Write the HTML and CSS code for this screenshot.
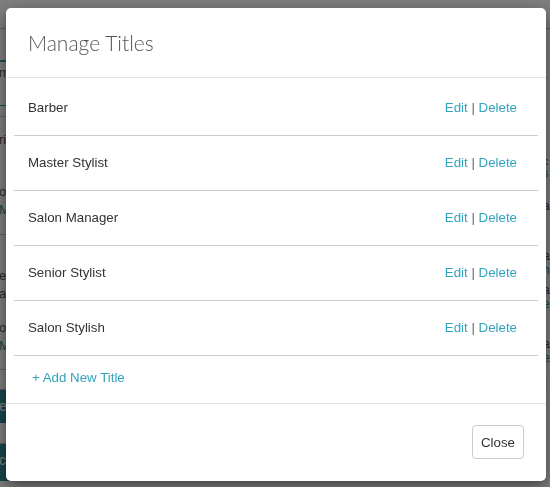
FILE: index.html
```html
<!DOCTYPE html>
<html>
<head>
<meta charset="utf-8">
<link rel="stylesheet" href="styles.css">
</head>
<body>
<div class="page">
  <div class="bg-left">
    <div class="bg-top"></div>
    <div class="bg-tab"></div>
    <div class="bg-text bg-h22">mon</div>
    <div class="bg-tab2"></div>
    <div class="bg-line"></div>
    <div class="bg-text bg-h22 bg-m12">rio</div>
    <div class="bg-text bg-h18 bg-m32">ocu</div>
    <div class="bg-text bg-teal bg-h18">Ma</div>
    <div class="bg-line bg-m15"></div>
    <div class="bg-text bg-h18 bg-m32">ey</div>
    <div class="bg-text bg-h18">al</div>
    <div class="bg-text bg-h18 bg-m16">ot</div>
    <div class="bg-text bg-teal bg-h18">Ma</div>
    <div class="bg-line bg-m14"></div>
    <div class="bg-btn bg-m19">e</div>
    <div class="bg-btn bg-m20 bg-tall">c</div>
  </div>
  <div class="bg-right">
    <div class="bg-top"></div>
    <div class="bg-text bg-h12 bg-m126">c</div>
    <div class="bg-text bg-teal bg-h12">s</div>
    <div class="bg-text bg-h14 bg-m20">a</div>
    <div class="bg-text bg-teal bg-h14">l</div>
    <div class="bg-text bg-h14 bg-m22">a</div>
    <div class="bg-text bg-teal bg-h14">n</div>
    <div class="bg-text bg-h14 bg-m6">a</div>
    <div class="bg-text bg-teal bg-h14">e</div>
    <div class="bg-text bg-h14 bg-m26">a</div>
    <div class="bg-text bg-teal bg-h14">e</div>
    <div class="bg-text bg-teal bg-h14 bg-m16">f</div>
  </div>
</div>
<div class="backdrop"></div>
<div class="modal">
  <div class="modal-header">
    <h4 class="modal-title">Manage Titles</h4>
  </div>
  <div class="modal-body">
    <div class="title-row"><span class="title-name">Barber</span><span class="actions"><a class="link">Edit</a> <span class="sep">|</span> <a class="link">Delete</a></span></div>
    <div class="title-row"><span class="title-name">Master Stylist</span><span class="actions"><a class="link">Edit</a> <span class="sep">|</span> <a class="link">Delete</a></span></div>
    <div class="title-row"><span class="title-name">Salon Manager</span><span class="actions"><a class="link">Edit</a> <span class="sep">|</span> <a class="link">Delete</a></span></div>
    <div class="title-row"><span class="title-name">Senior Stylist</span><span class="actions"><a class="link">Edit</a> <span class="sep">|</span> <a class="link">Delete</a></span></div>
    <div class="title-row"><span class="title-name">Salon Stylish</span><span class="actions"><a class="link">Edit</a> <span class="sep">|</span> <a class="link">Delete</a></span></div>
    <div class="add-row"><a class="link">+ Add New Title</a></div>
  </div>
  <div class="modal-footer">
    <button class="btn">Close</button>
  </div>
</div>
</body>
</html>
```

FILE: styles.css
```css
html, body {
  margin: 0;
  padding: 0;
  width: 550px;
  height: 487px;
  overflow: hidden;
  font-family: "Liberation Sans", Arial, sans-serif;
}

.page {
  display: flex;
  justify-content: space-between;
  height: 487px;
  background: #ffffff;
  overflow: hidden;
}

.bg-left {
  width: 60px;
  display: flex;
  flex-direction: column;
  margin-left: -1px;
}

.bg-right {
  width: 7px;
  display: flex;
  flex-direction: column;
  overflow: hidden;
}

.bg-top {
  height: 28px;
  border-bottom: 1px solid #b8b8b8;
  flex: none;
}

.bg-tab {
  height: 31px;
  border-bottom: 2px solid #3b9aa4;
  flex: none;
}

.bg-tab2 {
  height: 0;
  border-bottom: 1px solid #3b9aa4;
  flex: none;
  margin-top: 21px;
}

.bg-line {
  height: 0;
  border-bottom: 1px solid #c8c8c8;
  flex: none;
  margin-top: 10px;
}

.bg-text {
  font-size: 13px;
  color: #555;
  line-height: 18px;
  flex: none;
  white-space: nowrap;
  overflow: hidden;
}

.bg-teal { color: #2f8f99; }
.bg-h22 { height: 22px; line-height: 22px; }
.bg-h18 { height: 18px; }
.bg-h14 { height: 14px; line-height: 14px; font-size: 12px; }
.bg-h12 { height: 12px; line-height: 12px; font-size: 11px; }
.bg-m6 { margin-top: 6px; }
.bg-m12 { margin-top: 12px; }
.bg-m14 { margin-top: 14px; }
.bg-m15 { margin-top: 15px; }
.bg-m16 { margin-top: 16px; }
.bg-m19 { margin-top: 19px; }
.bg-m20 { margin-top: 20px; }
.bg-m22 { margin-top: 22px; }
.bg-m26 { margin-top: 26px; }
.bg-m32 { margin-top: 32px; }
.bg-m126 { margin-top: 126px; }

.bg-btn {
  flex: none;
  height: 33px;
  line-height: 33px;
  background: #2f8f99;
  color: #ffffff;
  font-size: 14px;
  border-top: 1px solid #bdbdbd;
}

.bg-tall { height: 37px; }

.backdrop {
  position: fixed;
  inset: 0;
  background: rgba(0, 0, 0, 0.5);
}

.modal {
  position: absolute;
  left: 6px;
  top: 8px;
  width: 540px;
  height: 473px;
  background: #ffffff;
  border-radius: 5px;
  box-shadow: 0 5px 15px rgba(0, 0, 0, 0.5);
  display: flex;
  flex-direction: column;
}

.modal-header {
  height: 69px;
  border-bottom: 1px solid #e5e5e5;
  display: flex;
  align-items: center;
  padding-left: 22px;
  flex: none;
}

.modal-title {
  margin: 0;
  font-family: "Lato", sans-serif;
  font-weight: 300;
  font-size: 21px;
  color: #555555;
}

.modal-body {
  padding: 3px 8px 0;
  flex: none;
}

.title-row {
  height: 52px;
  border-bottom: 1px solid #cccccc;
  display: flex;
  align-items: center;
  justify-content: space-between;
  padding: 0 21px 2px 14px;
  font-size: 13.3px;
  color: #333333;
}

.actions {
  white-space: nowrap;
}

.sep {
  color: #666666;
}

.link {
  color: #31a3bf;
  text-decoration: none;
  cursor: pointer;
}

.add-row {
  height: 43px;
  padding: 0 0 4px 18px;
  display: flex;
  align-items: center;
  font-size: 13.3px;
}

.modal-footer {
  flex: 1;
  border-top: 1px solid #e5e5e5;
  display: flex;
  justify-content: flex-end;
  align-items: flex-start;
  padding: 21px 22px;
}

.btn {
  height: 34px;
  padding: 0 8px;
  background: #ffffff;
  border: 1px solid #cccccc;
  border-radius: 4px;
  font-family: "Liberation Sans", Arial, sans-serif;
  font-size: 13.3px;
  color: #333333;
}
```
